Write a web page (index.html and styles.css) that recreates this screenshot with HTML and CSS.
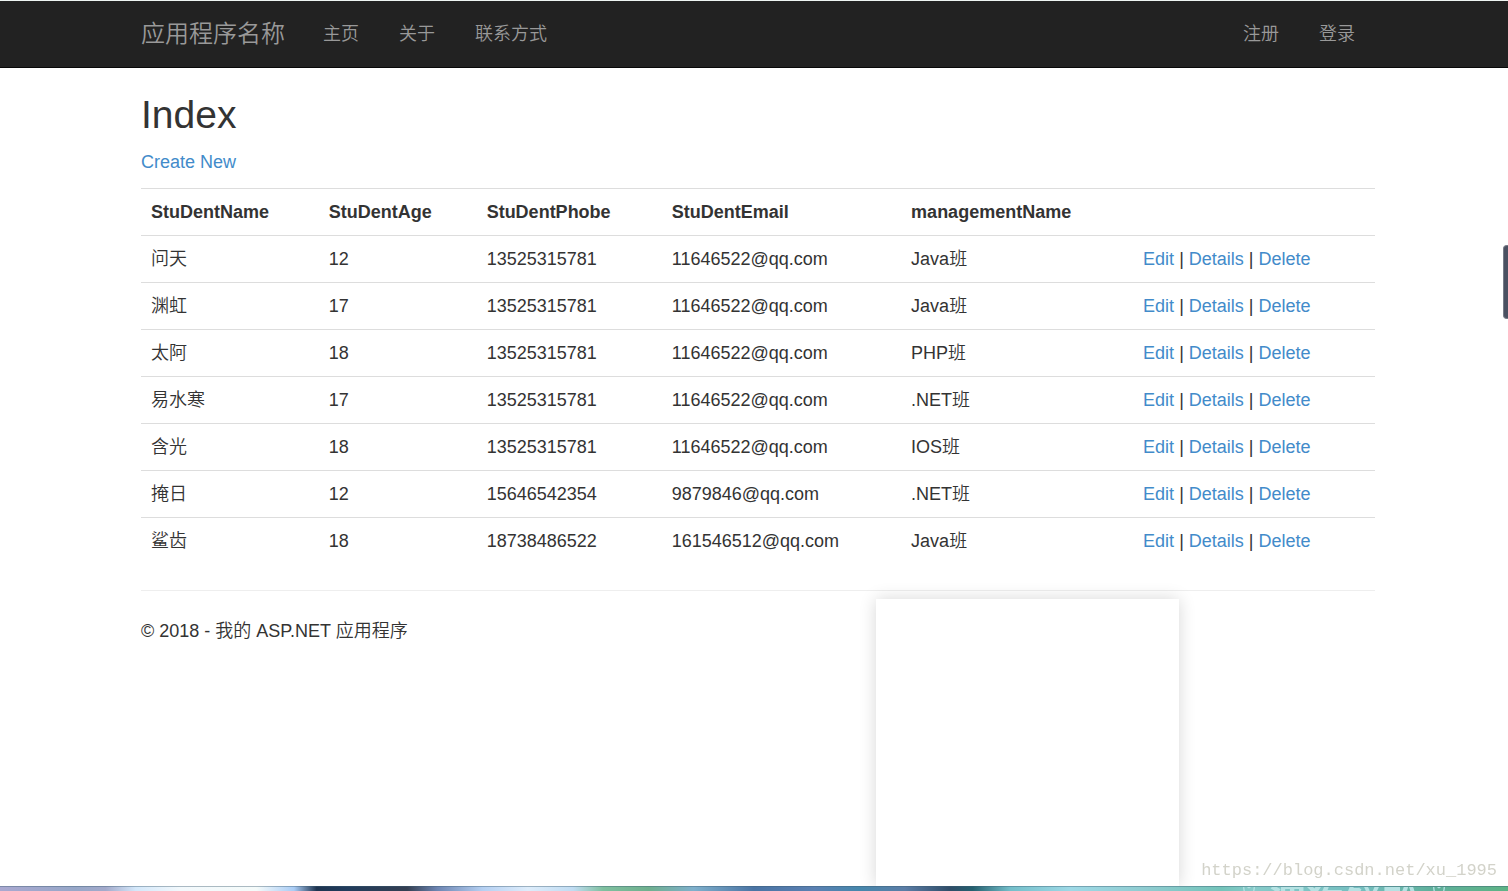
FILE: index.html
```html
<!DOCTYPE html>
<html lang="zh-CN">
<head>
    <meta charset="UTF-8">
    <meta name="viewport" content="width=device-width, initial-scale=1.0">
    <title>Index - 我的 ASP.NET 应用程序</title>
    <link rel="stylesheet" href="styles.css">
</head>
<body>
    <header class="navbar">
        <nav class="container navbar-inner">
            <a class="navbar-brand" href="#">应用程序名称</a>
            <ul class="nav">
                <li><a href="#">主页</a></li>
                <li><a href="#">关于</a></li>
                <li><a href="#">联系方式</a></li>
            </ul>
            <ul class="nav navbar-right">
                <li><a href="#">注册</a></li>
                <li><a href="#">登录</a></li>
            </ul>
        </nav>
    </header>

    <main class="container">
        <h2>Index</h2>
        <p><a href="#">Create New</a></p>
        <table class="table">
            <colgroup>
                <col class="col-name">
                <col class="col-age">
                <col class="col-phone">
                <col class="col-email">
                <col class="col-class">
                <col>
            </colgroup>
            <thead>
                <tr>
                    <th>StuDentName</th>
                    <th>StuDentAge</th>
                    <th>StuDentPhobe</th>
                    <th>StuDentEmail</th>
                    <th>managementName</th>
                    <th></th>
                </tr>
            </thead>
            <tbody>
                <tr>
                    <td>问天</td>
                    <td>12</td>
                    <td>13525315781</td>
                    <td>11646522@qq.com</td>
                    <td>Java班</td>
                    <td><a href="#">Edit</a> | <a href="#">Details</a> | <a href="#">Delete</a></td>
                </tr>
                <tr>
                    <td>渊虹</td>
                    <td>17</td>
                    <td>13525315781</td>
                    <td>11646522@qq.com</td>
                    <td>Java班</td>
                    <td><a href="#">Edit</a> | <a href="#">Details</a> | <a href="#">Delete</a></td>
                </tr>
                <tr>
                    <td>太阿</td>
                    <td>18</td>
                    <td>13525315781</td>
                    <td>11646522@qq.com</td>
                    <td>PHP班</td>
                    <td><a href="#">Edit</a> | <a href="#">Details</a> | <a href="#">Delete</a></td>
                </tr>
                <tr>
                    <td>易水寒</td>
                    <td>17</td>
                    <td>13525315781</td>
                    <td>11646522@qq.com</td>
                    <td>.NET班</td>
                    <td><a href="#">Edit</a> | <a href="#">Details</a> | <a href="#">Delete</a></td>
                </tr>
                <tr>
                    <td>含光</td>
                    <td>18</td>
                    <td>13525315781</td>
                    <td>11646522@qq.com</td>
                    <td>IOS班</td>
                    <td><a href="#">Edit</a> | <a href="#">Details</a> | <a href="#">Delete</a></td>
                </tr>
                <tr>
                    <td>掩日</td>
                    <td>12</td>
                    <td>15646542354</td>
                    <td>9879846@qq.com</td>
                    <td>.NET班</td>
                    <td><a href="#">Edit</a> | <a href="#">Details</a> | <a href="#">Delete</a></td>
                </tr>
                <tr>
                    <td>鲨齿</td>
                    <td>18</td>
                    <td>18738486522</td>
                    <td>161546512@qq.com</td>
                    <td>Java班</td>
                    <td><a href="#">Edit</a> | <a href="#">Details</a> | <a href="#">Delete</a></td>
                </tr>
            </tbody>
        </table>
        <hr>
        <footer>
            <p>© 2018 - 我的 ASP.NET 应用程序</p>
        </footer>
    </main>

    <div class="popup"></div>
    <div class="side-handle"></div>
    <div class="watermark">https://blog.csdn.net/xu_1995</div>
    <div class="desktop-strip">❀渭狗鲜雅❀</div>
</body>
</html>
```

FILE: styles.css
```css
* {
    box-sizing: border-box;
}
body {
    margin: 0;
    font-family: "Liberation Sans", Arial, "Noto Sans CJK SC", sans-serif;
    font-size: 18px;
    font-weight: 350;
    line-height: 26px;
    color: #333;
    background-color: #fff;
}
a {
    color: #428bca;
    text-decoration: none;
}
a:hover {
    text-decoration: underline;
}
.container {
    max-width: 1274px;
    margin: 0 auto;
    padding: 0 16px 0 24px;
}
.navbar {
    background-color: #222;
    border-top: 1px solid #eef5f2;
    border-bottom: 1px solid #080808;
}
.navbar-inner {
    display: flex;
    align-items: center;
    min-height: 66px;
}
.navbar a {
    color: #999;
}
.navbar-brand {
    margin-right: 18px;
    font-size: 24px;
}
.nav {
    display: flex;
    margin: 0;
    padding: 0;
    list-style: none;
}
.nav a {
    display: block;
    padding: 20px;
}
.navbar-right {
    margin-left: auto;
}
h2 {
    margin: 25px 0 12px;
    font-size: 39px;
    font-weight: 400;
    line-height: 44px;
}
p {
    margin: 0 0 13px;
}
.table {
    width: 100%;
    border-collapse: collapse;
    table-layout: fixed;
}
.table th,
.table td {
    height: 47px;
    padding: 10px;
    border-top: 1px solid #ddd;
    text-align: left;
    white-space: nowrap;
}
.table th {
    font-weight: bold;
}
.col-name {
    width: 14.4%;
}
.col-age {
    width: 12.8%;
}
.col-phone {
    width: 15%;
}
.col-email {
    width: 19.4%;
}
.col-class {
    width: 18.8%;
}
hr {
    margin: 25px 0 27px;
    border: 0;
    border-top: 1px solid #eee;
}
.popup {
    position: fixed;
    top: 599px;
    bottom: 5px;
    left: 876px;
    width: 303px;
    background-color: #fff;
    box-shadow: 0 0 16px rgba(0, 0, 0, 0.16);
}
.side-handle {
    position: fixed;
    top: 245px;
    right: 0;
    width: 5px;
    height: 74px;
    border: 1px solid #777b87;
    border-right: 0;
    border-radius: 4px 0 0 4px;
    background-color: #4a5061;
}
.watermark {
    position: fixed;
    right: 11px;
    bottom: 7px;
    font-family: "Liberation Mono", monospace;
    font-size: 17px;
    color: #d3d3ca;
}
.desktop-strip {
    position: fixed;
    right: 0;
    bottom: 0;
    left: 0;
    height: 5px;
    padding-right: 50px;
    overflow: hidden;
    border-top: 1px solid rgba(60, 90, 110, 0.4);
    font-size: 38px;
    font-weight: bold;
    line-height: 34px;
    text-align: right;
    color: #b5e2e3;
    background: linear-gradient(to right, #a9a8d0 0%, #97a7c8 5%, #a3aacb 7%, #d4e8fa 9%, #f3f9fc 12%, #f5fbfa 17%, #a9ccf5 19.5%, #1e3450 21%, #213c5c 23%, #343f52 27%, #6d85b2 29%, #b5d0f2 32%, #deedfb 35%, #c0dcf2 38%, #7fc09f 40%, #6fb08e 43%, #7fb0cc 46%, #4a74a4 50%, #5a80b2 54%, #4687ac 57%, #5b7da6 60%, #2f4d68 63%, #24606f 64.5%, #74bfca 67%, #9ed9e6 71%, #8fccd0 76%, #74c4ba 81%, #86cbc9 83%, #75bfc0 90%, #5fb09b 95%, #5db385 100%);
}
```
